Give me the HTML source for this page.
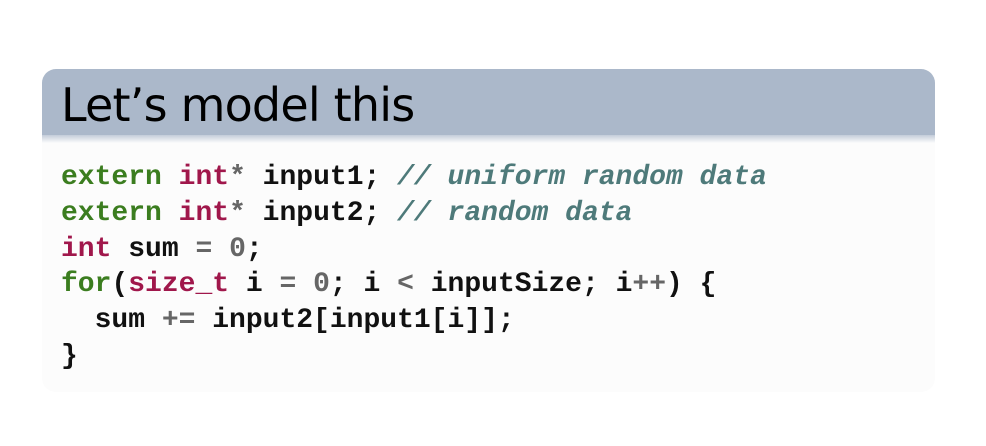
<!DOCTYPE html>
<html><head><meta charset="utf-8"><style>
html,body{margin:0;padding:0;background:#fff;width:986px;height:446px;overflow:hidden}
.box{position:absolute;left:42px;top:69px;width:893px;height:323px;border-radius:14px;background:#fcfcfc;overflow:hidden}
.hd{position:absolute;left:0;top:0;width:100%;height:66px;background:#abb8ca}
.gr{position:absolute;left:0;top:66px;width:100%;height:8px;background:linear-gradient(#c3ccd9,#fcfcfc)}
.t{position:absolute;left:19px;top:9px;font-family:"DejaVu Sans","Liberation Sans",sans-serif;font-size:46px;color:#000;letter-spacing:-0.8px}
pre{position:absolute;left:19px;top:91px;margin:0;font-family:"Liberation Mono",monospace;font-weight:bold;font-size:28px;line-height:35.8px;color:#111}
.g{color:#3b7d1f}.r{color:#a0174b}.c{color:#4e7a7a;font-style:italic}.o{color:#666}
</style></head><body>
<div class="box"><div class="hd"></div><div class="gr"></div>
<div class="t">Let’s model this</div>
<pre><span class="g">extern</span> <span class="r">int</span><span class="o">*</span> input1; <span class="c">// uniform random data</span>
<span class="g">extern</span> <span class="r">int</span><span class="o">*</span> input2; <span class="c">// random data</span>
<span class="r">int</span> sum <span class="o">=</span> <span class="o">0</span>;
<span class="g">for</span>(<span class="r">size_t</span> i <span class="o">=</span> <span class="o">0</span>; i <span class="o">&lt;</span> inputSize; i<span class="o">++</span>) {
  sum <span class="o">+=</span> input2[input1[i]];
}</pre>
</div>
</body></html>
